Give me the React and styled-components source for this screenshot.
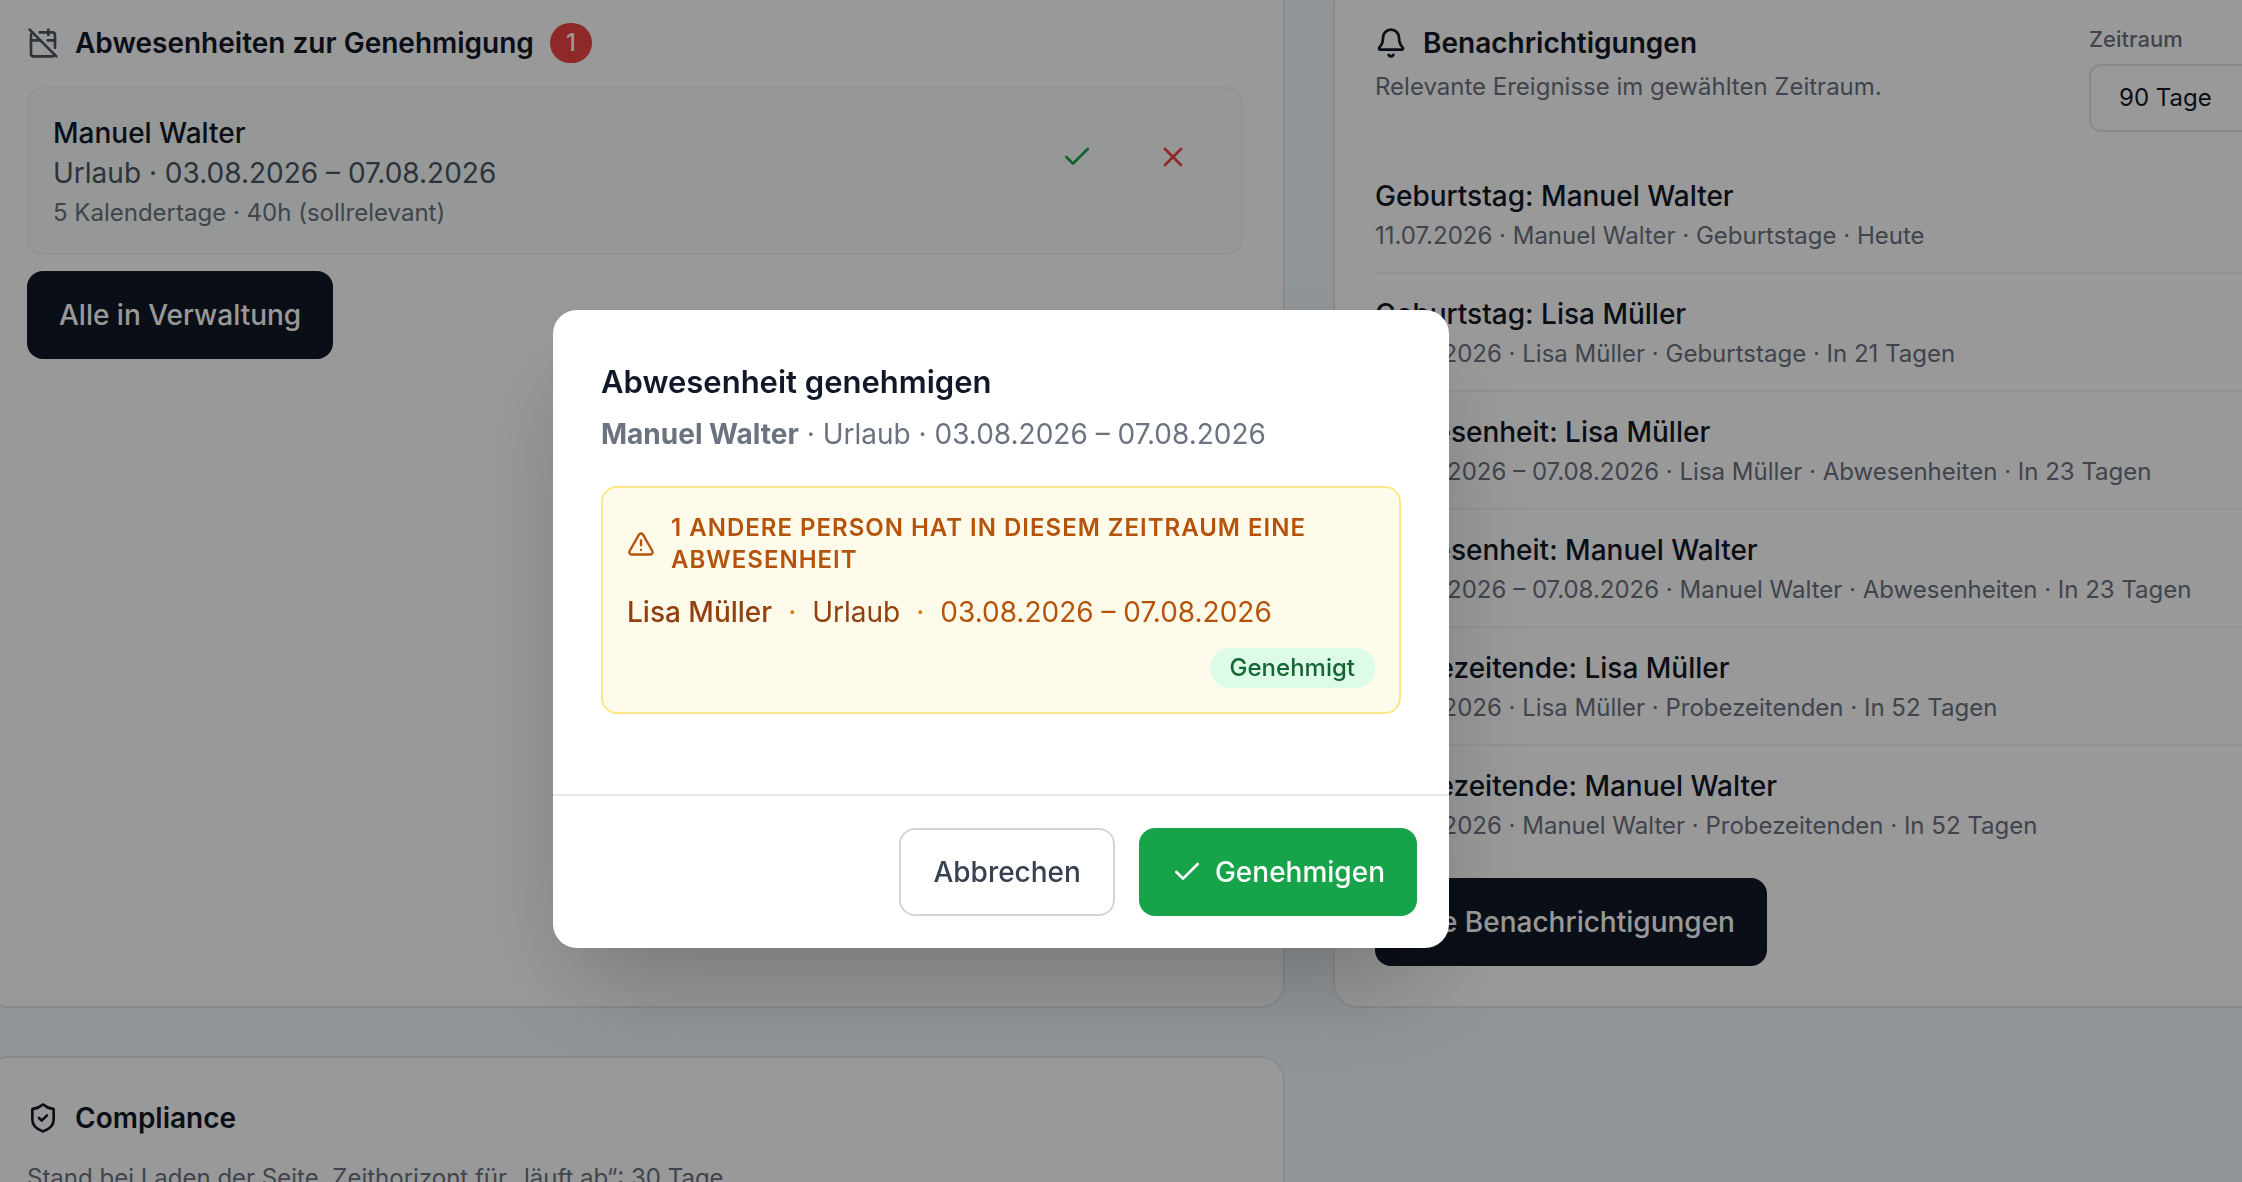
import React from "react";
import styled, { createGlobalStyle, css } from "styled-components";
import { Bell, CalendarOff, Check, ShieldCheck, TriangleAlert, X } from "lucide-react";

const GlobalStyle = createGlobalStyle`
  * { box-sizing: border-box; }
  html, body { margin: 0; }
  body {
    background: #f1f8fd;
    color: #111827;
    font-family: Inter, "Liberation Sans", sans-serif;
    font-size: 28px;
    line-height: 40px;
    overflow: hidden;
  }
  h1, h2, h3, p, ul { margin: 0; padding: 0; font: inherit; }
  button, select { font: inherit; color: inherit; }
  svg { flex: none; stroke-width: 2; }
`;

/* The dashboard is wider than the window and scrolled a little down and right. */
const Page = styled.main`
  display: grid;
  grid-template-columns: 1fr 1fr;
  grid-auto-rows: max-content;
  gap: 48px;
  width: calc(100vw + 406px);
  height: 100vh;
  margin-left: -15px;
  overflow: hidden;
`;

const Card = styled.section`
  display: flex;
  flex-direction: column;
  align-items: flex-start;
  padding: 40px;
  border: 2px solid #e5e7eb;
  border-radius: 24px;
  background: #fff;
  ${(p) => p.$scrolled && css`
    margin-top: -19px;
  `}
`;

const TitleRow = styled.div`
  display: flex;
  align-items: center;
  gap: 16px;
`;

const Title = styled.h2`
  font-weight: 600;
`;

const Count = styled.span`
  padding: 4px 16px;
  border-radius: 20px;
  background: #ef4444;
  color: #fff;
  font-size: 24px;
  line-height: 32px;
  font-weight: 500;
`;

const Request = styled.article`
  display: flex;
  align-items: flex-start;
  justify-content: space-between;
  align-self: stretch;
  margin: 24px 0 16px;
  padding: 24px;
  border: 2px solid #f3f4f6;
  border-radius: 16px;
  background: #f8fdfb;
`;

const Name = styled.h3`
  font-weight: 500;
`;

const Detail = styled.p`
  color: #4b5563;
`;

const Small = styled.p`
  margin-top: ${(p) => p.$gap}px;
  color: #6b7280;
  font-size: 24px;
  line-height: 32px;
`;

const Actions = styled.div`
  display: flex;
  gap: 8px;
`;

const IconButton = styled.button`
  display: grid;
  place-items: center;
  width: 88px;
  height: 88px;
  padding: 0;
  border: 0;
  background: transparent;
  color: ${(p) => p.$color};
`;

const Button = styled.button`
  display: inline-flex;
  align-items: center;
  gap: 12px;
  height: 88px;
  padding: 0 32px;
  border: 0;
  border-radius: 16px;
  background: #111827;
  color: #fff;
  font-weight: 500;
  white-space: nowrap;
  ${(p) => p.$kind === "outline" && css`
    border: 2px solid #d1d5db;
    background: #fff;
    color: #374151;
  `}
  ${(p) => p.$kind === "confirm" && css`
    background: #16a34a;
  `}
`;

const NoticeHead = styled.header`
  display: grid;
  grid-template-columns: 1fr 502px;
  align-self: stretch;
  margin-bottom: 24px;
`;

const Period = styled.div`
  display: flex;
  flex-direction: column;
`;

const Label = styled.label`
  color: #6b7280;
  font-size: 22px;
  line-height: 33px;
  font-weight: 500;
`;

const Select = styled.select`
  appearance: none;
  width: 100%;
  height: 68px;
  margin-top: 8px;
  padding: 0 28px;
  border: 2px solid #e5e7eb;
  border-radius: 12px;
  background: #fff;
  font-size: 24px;
`;

const Notices = styled.ul`
  align-self: stretch;
  margin-bottom: 16px;
  list-style: none;
`;

const Notice = styled.li`
  padding: 20px 0;
  border-bottom: 2px solid #f3f4f6;
  &:last-child { border-bottom: 0; }
`;

const Overlay = styled.div`
  position: fixed;
  inset: 0;
  display: flex;
  align-items: center;
  justify-content: center;
  padding: 76px 240px 0 0;
  background: rgba(0, 0, 0, 0.4);
`;

const Dialog = styled.div`
  width: 100%;
  max-width: 896px;
  border-radius: 24px;
  background: #fff;
  box-shadow: 0 50px 100px -24px rgba(0, 0, 0, 0.25);
`;

const DialogBody = styled.div`
  padding: 48px 48px 80px;
`;

const DialogTitle = styled.h1`
  font-size: 31px;
  line-height: 48px;
  font-weight: 600;
`;

const DialogText = styled.p`
  margin-top: 8px;
  color: #6b7280;
  strong { font-weight: 700; }
`;

const Warning = styled.section`
  display: flex;
  flex-direction: column;
  margin-top: 32px;
  padding: 24px;
  border: 2px solid #fde68a;
  border-radius: 16px;
  background: #fffbeb;
  color: #b45309;
`;

const WarningTitle = styled.h2`
  display: flex;
  align-items: center;
  gap: 16px;
  font-size: 24px;
  line-height: 32px;
  font-weight: 600;
  letter-spacing: 1px;
  text-transform: uppercase;
`;

const Conflict = styled.div`
  display: flex;
  flex-wrap: wrap;
  gap: 16px;
  margin-top: 16px;
`;

const Person = styled.span`
  color: #92400e;
  font-weight: ${(p) => (p.$strong ? 500 : 400)};
`;

const Dot = styled.span`
  color: #d97706;
`;

const Status = styled.span`
  margin-left: auto;
  padding: 4px 20px;
  border-radius: 20px;
  background: #dcfce7;
  color: #166534;
  font-size: 24px;
  line-height: 32px;
  font-weight: 500;
`;

const DialogFooter = styled.footer`
  display: flex;
  justify-content: flex-end;
  gap: 24px;
  padding: 32px;
  border-top: 2px solid #e5e7eb;
`;

const notices = [
  ["Geburtstag: Manuel Walter", "11.07.2026 · Manuel Walter · Geburtstage · Heute"],
  ["Geburtstag: Lisa Müller", "01.08.2026 · Lisa Müller · Geburtstage · In 21 Tagen"],
  ["Abwesenheit: Lisa Müller", "03.08.2026 – 07.08.2026 · Lisa Müller · Abwesenheiten · In 23 Tagen"],
  ["Abwesenheit: Manuel Walter", "03.08.2026 – 07.08.2026 · Manuel Walter · Abwesenheiten · In 23 Tagen"],
  ["Probezeitende: Lisa Müller", "01.09.2026 · Lisa Müller · Probezeitenden · In 52 Tagen"],
  ["Probezeitende: Manuel Walter", "01.09.2026 · Manuel Walter · Probezeitenden · In 52 Tagen"],
];

export default function App() {
  return (
    <>
      <GlobalStyle />
      <Page>
        <Card $scrolled>
          <TitleRow>
            <CalendarOff size={32} color="#4b5563" />
            <Title>Abwesenheiten zur Genehmigung</Title>
            <Count>1</Count>
          </TitleRow>
          <Request>
            <div>
              <Name>Manuel Walter</Name>
              <Detail>Urlaub · 03.08.2026 – 07.08.2026</Detail>
              <Small $gap={4}>5 Kalendertage · 40h (sollrelevant)</Small>
            </div>
            <Actions>
              <IconButton $color="#16a34a" aria-label="Genehmigen"><Check size={32} /></IconButton>
              <IconButton $color="#ef4444" aria-label="Ablehnen"><X size={32} /></IconButton>
            </Actions>
          </Request>
          <Button>Alle in Verwaltung</Button>
        </Card>
        <Card $scrolled>
          <NoticeHead>
            <div>
              <TitleRow>
                <Bell size={32} />
                <Title>Benachrichtigungen</Title>
              </TitleRow>
              <Small $gap={8}>Relevante Ereignisse im gewählten Zeitraum.</Small>
            </div>
            <Period>
              <Label htmlFor="period">Zeitraum</Label>
              <Select id="period"><option>90 Tage</option></Select>
            </Period>
          </NoticeHead>
          <Notices>
            {notices.map(([title, info]) => (
              <Notice key={title}>
                <Name>{title}</Name>
                <Small $gap={4}>{info}</Small>
              </Notice>
            ))}
          </Notices>
          <Button>Alle Benachrichtigungen</Button>
        </Card>
        <Card>
          <TitleRow>
            <ShieldCheck size={32} />
            <Title>Compliance</Title>
          </TitleRow>
          <Small $gap={24}>Stand bei Laden der Seite. Zeithorizont für „läuft ab“: 30 Tage.</Small>
        </Card>
      </Page>
      <Overlay>
        <Dialog role="dialog" aria-modal="true" aria-labelledby="dialog-title">
          <DialogBody>
            <DialogTitle id="dialog-title">Abwesenheit genehmigen</DialogTitle>
            <DialogText><strong>Manuel Walter</strong> · Urlaub · 03.08.2026 – 07.08.2026</DialogText>
            <Warning>
              <WarningTitle>
                <TriangleAlert size={28} />
                <span>1 andere Person hat in diesem Zeitraum eine Abwesenheit</span>
              </WarningTitle>
              <Conflict>
                <Person $strong>Lisa Müller</Person>
                <Dot>·</Dot>
                <Person>Urlaub</Person>
                <Dot>·</Dot>
                <span>03.08.2026 – 07.08.2026</span>
                <Status>Genehmigt</Status>
              </Conflict>
            </Warning>
          </DialogBody>
          <DialogFooter>
            <Button $kind="outline">Abbrechen</Button>
            <Button $kind="confirm"><Check size={32} />Genehmigen</Button>
          </DialogFooter>
        </Dialog>
      </Overlay>
    </>
  );
}
